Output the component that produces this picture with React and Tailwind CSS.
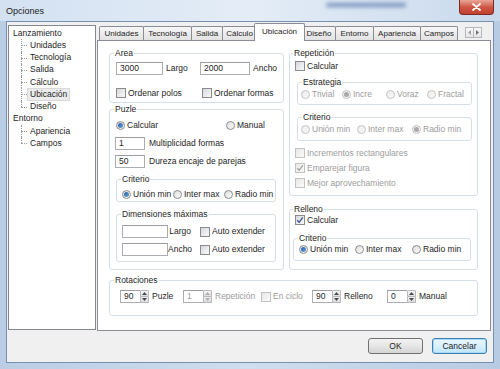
import React from "react";

// Opciones dialog — Win7 look
const tabs = [
  ["Unidades", "w-[45px]"],
  ["Tecnología", "w-[49px]"],
  ["Salida", "w-[32px]"],
  ["Cálculo", "w-[35px]"],
  ["Ubicación", "w-[51px]", true],
  ["Diseño", "w-[34px]"],
  ["Entorno", "w-[39px]"],
  ["Apariencia", "w-[48px]"],
  ["Campos", "w-[38px]"],
];

const tree = [
  { label: "Lanzamiento", kids: ["Unidades", "Tecnología", "Salida", "Cálculo", "Ubicación", "Diseño"] },
  { label: "Entorno", kids: ["Apariencia", "Campos"] },
];

function Radio({ checked, disabled, label, className = "" }) {
  return (
    <div className={`flex items-center h-[11px] shrink-0 ${className}`}>
      <span
        className={`w-[9px] h-[9px] rounded-full border flex items-center justify-center shrink-0 ${
          disabled
            ? "border-[#c2c2c2] bg-gradient-to-br from-[#ececec] to-[#fafafa]"
            : "border-[#8b8b8b] bg-gradient-to-br from-[#d9dce0] to-[#fdfdfd]"
        }`}
      >
        {checked && (
          <span
            className={`w-[5px] h-[5px] rounded-full ${
              disabled ? "bg-[#a9a9a9]" : "bg-gradient-to-br from-[#1c5aa0] to-[#6fa8dc]"
            }`}
          />
        )}
      </span>
      <span className={`ml-[2px] whitespace-nowrap ${disabled ? "text-[#9c9c9c]" : ""}`}>{label}</span>
    </div>
  );
}

function Check({ checked, disabled, label, className = "" }) {
  return (
    <div className={`flex items-center h-[10px] shrink-0 ${className}`}>
      <span
        className={`w-[10px] h-[10px] border flex items-center justify-center shrink-0 ${
          disabled
            ? "border-[#c2c2c2] bg-gradient-to-br from-[#e8e8e8] to-[#fafafa]"
            : "border-[#8b8b8b] bg-gradient-to-br from-[#d5d8dd] to-[#fafafa]"
        }`}
      >
        {checked && (
          <svg width="8" height="8" viewBox="0 0 8 8">
            <path
              d="M1.2 4.2 L3.2 6.3 L6.8 1.3"
              fill="none"
              stroke={disabled ? "#a0a0a0" : "#3b5590"}
              strokeWidth="1.3"
            />
          </svg>
        )}
      </span>
      <span className={`ml-[2px] whitespace-nowrap ${disabled ? "text-[#9c9c9c]" : ""}`}>{label}</span>
    </div>
  );
}

function TextBox({ value = "", className = "", disabled }) {
  return (
    <div
      className={`h-[13px] border border-[#abadb3] border-t-[#9a9ca4] bg-white flex items-center pl-[3px] shrink-0 ${
        disabled ? "text-[#9c9c9c]" : ""
      } ${className}`}
    >
      {value}
    </div>
  );
}

function Spin({ value, disabled, label, className = "" }) {
  const arrow = disabled ? "#b0b0b0" : "#4a4a4a";
  return (
    <div className={`flex items-center shrink-0 ${className}`}>
      <TextBox value={value} disabled={disabled} className="w-[20px] border-r-0" />
      <div className="w-[9px] h-[13px] flex flex-col shrink-0">
        <div className="flex-1 border border-[#b7b9bf] rounded-t-[1px] bg-gradient-to-b from-[#f6f6f6] to-[#e1e1e1] flex items-center justify-center">
          <svg width="5" height="3" viewBox="0 0 5 3">
            <path d="M0 3 L2.5 0 L5 3 Z" fill={arrow} />
          </svg>
        </div>
        <div className="flex-1 border border-t-0 border-[#b7b9bf] rounded-b-[1px] bg-gradient-to-b from-[#f0f0f0] to-[#dcdcdc] flex items-center justify-center">
          <svg width="5" height="3" viewBox="0 0 5 3">
            <path d="M0 0 L2.5 3 L5 0 Z" fill={arrow} />
          </svg>
        </div>
      </div>
      <span className={`ml-[3px] whitespace-nowrap ${disabled ? "text-[#9c9c9c]" : ""}`}>{label}</span>
    </div>
  );
}

function Group({ title, className = "", legendClass = "ml-[4px]", children }) {
  return (
    <fieldset className={`border border-[#d5dfe5] rounded-[3px] min-w-0 ${className}`}>
      <legend className={`px-[1px] leading-[11px] ${legendClass}`}>{title}</legend>
      {children}
    </fieldset>
  );
}

function TreeRow({ label, last, selected }) {
  return (
    <div className="flex items-center h-[12.25px]">
      <div className="relative ml-[12px] w-[7px] self-stretch shrink-0">
        <div
          className={`absolute left-0 top-0 border-l border-dotted border-[#9a9a9a] ${last ? "h-1/2" : "h-full"}`}
        />
        <div className="absolute left-0 top-1/2 w-[6px] border-t border-dotted border-[#9a9a9a]" />
      </div>
      <span
        className={`px-[2px] leading-[11px] ${
          selected ? "bg-[#ececec] border border-[#d9d9d9] -ml-px" : "border border-transparent -ml-px"
        }`}
      >
        {label}
      </span>
    </div>
  );
}

export default function App() {
  return (
    <div className="relative w-[500px] h-[369px] overflow-hidden flex flex-col bg-gradient-to-r from-[#b9cde4] via-[#cfdeef] to-[#b7cbe2] font-['Liberation_Sans',Arial,sans-serif] text-[8.5px] leading-[11px] text-[#1e1e1e]">
      {/* Title bar */}
      <div className="h-[21px] flex items-start shrink-0 bg-gradient-to-r from-[#d3e1f1] via-[#e4edf7] to-[#c9d9ec] relative">
        <span className="ml-[6px] mt-[6px] text-[9px] text-[#1b1b1b]">Opciones</span>
        <span className="ml-[282px] mt-[3px] w-[80px] h-[4px] rounded-full bg-[#4f6fa5] blur-[2px] opacity-70" />
        <div className="ml-auto mr-[6px] w-[35px] h-[15px] rounded-b-[4px] border border-t-0 border-[#7d2a22] bg-gradient-to-b from-[#e8a598] via-[#cf5645] to-[#c2402f] flex items-center justify-center">
          <svg width="9" height="8" viewBox="0 0 9 8">
            <path d="M1 1 L8 7 M8 1 L1 7" stroke="#ffffff" strokeWidth="1.8" strokeLinecap="round" />
          </svg>
        </div>
      </div>

      {/* Body */}
      <div className="mx-[6px] h-[342px] border border-[#7790b0] bg-[#f0f0f0] flex flex-col shrink-0">
        <div className="flex items-start">
          {/* Tree */}
          <div className="ml-[1px] mt-[3px] w-[88px] h-[305px] border border-[#828790] bg-white pt-[1px] shrink-0">
            {tree.map((n) => (
              <div key={n.label}>
                <div className="h-[12.25px] flex items-center pl-[4px]">{n.label}</div>
                {n.kids.map((k, i) => (
                  <TreeRow key={k} label={k} last={i === n.kids.length - 1} selected={k === "Ubicación"} />
                ))}
              </div>
            ))}
          </div>

          {/* Tabs */}
          <div className="ml-[1px] mt-[1px] w-[394px] shrink-0">
            <div className="h-[17px] flex items-end pl-[2px] text-[8px]">
              {tabs.map(([t, w, sel], i) =>
                sel ? (
                  <div
                    key={t}
                    className={`${w} -ml-[3px] -mr-[2px] h-[18px] -mb-px relative z-10 bg-white border border-b-0 border-[#898c95] rounded-t-[2px] flex justify-center pt-[2px]`}
                  >
                    {t}
                  </div>
                ) : (
                  <div
                    key={t}
                    className={`${w} ${i === 0 ? "" : "-ml-px"} h-[14px] border border-b-0 border-[#898c95] rounded-t-[2px] bg-gradient-to-b from-[#f7f7f7] to-[#e2e2e2] flex items-center justify-center`}
                  >
                    {t}
                  </div>
                )
              )}
              <div className="ml-[7px] mb-[2px] flex">
                <div className="w-[9px] h-[11px] border border-[#b5b8be] bg-gradient-to-b from-[#f8f8f8] to-[#e6e6e6] flex items-center justify-center">
                  <svg width="3" height="5" viewBox="0 0 3 5">
                    <path d="M3 0 L0 2.5 L3 5 Z" fill="#a0a0a0" />
                  </svg>
                </div>
                <div className="w-[9px] h-[11px] -ml-px border border-[#b5b8be] bg-gradient-to-b from-[#f8f8f8] to-[#e6e6e6] flex items-center justify-center">
                  <svg width="3" height="5" viewBox="0 0 3 5">
                    <path d="M0 0 L3 2.5 L0 5 Z" fill="#707070" />
                  </svg>
                </div>
              </div>
            </div>

            <div className="h-[291px] border border-[#898c95] bg-white pl-[11px] pt-[7px]">
              <div className="flex items-start">
                {/* Left column */}
                <div className="w-[175px] shrink-0">
                  <Group title="Area" className="pb-[4px]">
                    <div className="flex items-center mt-[3px]">
                      <TextBox value="3000" className="ml-[6px] w-[47px]" />
                      <span className="ml-[3px] w-[34px]">Largo</span>
                      <TextBox value="2000" className="w-[50px]" />
                      <span className="ml-[3px]">Ancho</span>
                    </div>
                    <div className="flex items-center mt-[13px]">
                      <Check label="Ordenar polos" className="ml-[6px] w-[86px]" />
                      <Check label="Ordenar formas" />
                    </div>
                  </Group>

                  <Group title="Puzle" className="mt-[1px] pb-[7px]">
                    <div className="flex items-center mt-[5px]">
                      <Radio checked label="Calcular" className="ml-[6px] w-[110px]" />
                      <Radio label="Manual" />
                    </div>
                    <div className="flex items-center mt-[6px]">
                      <TextBox value="1" className="ml-[5px] w-[30px]" />
                      <span className="ml-[4px]">Multiplicidad formas</span>
                    </div>
                    <div className="flex items-center mt-[5px]">
                      <TextBox value="50" className="ml-[5px] w-[30px]" />
                      <span className="ml-[4px]">Dureza encaje de parejas</span>
                    </div>
                    <Group title="Criterio" className="ml-[6px] w-[160px] mt-[6px] pb-[1px]">
                      <div className="flex items-center mt-[4px]">
                        <Radio checked label="Unión min" className="ml-[5px] w-[51px]" />
                        <Radio label="Inter max" className="w-[51px]" />
                        <Radio label="Radio min" />
                      </div>
                    </Group>
                    <Group title="Dimensiones máximas" className="ml-[6px] w-[160px] mt-[7px] pb-[5px]">
                      <div className="flex items-center mt-[5px]">
                        <TextBox className="ml-[5px] w-[46px]" />
                        <span className="w-[23px] text-right">Largo</span>
                        <Check label="Auto extender" className="ml-[9px]" />
                      </div>
                      <div className="flex items-center mt-[5px]">
                        <TextBox className="ml-[5px] w-[46px]" />
                        <span className="w-[23px] text-right">Ancho</span>
                        <Check label="Auto extender" className="ml-[9px]" />
                      </div>
                    </Group>
                  </Group>
                </div>

                {/* Right column */}
                <div className="ml-[5px] w-[189px] shrink-0">
                  <Group title="Repetición" legendClass="ml-[3px]" className="pb-[7px]">
                    <Check label="Calcular" className="ml-[5px] mt-[2px]" />
                    <Group title="Estrategia" className="ml-[7px] w-[175px] mt-[6px] pb-[4px]">
                      <div className="flex items-center mt-[1px]">
                        <Radio disabled label="Trivial" className="ml-[3px] w-[41px]" />
                        <Radio disabled checked label="Incre" className="w-[44px]" />
                        <Radio disabled label="Voraz" className="w-[41px]" />
                        <Radio disabled label="Fractal" />
                      </div>
                    </Group>
                    <Group title="Criterio" className="ml-[7px] w-[175px] mt-[7px] pb-[5px]">
                      <div className="flex items-center mt-[1px]">
                        <Radio disabled label="Unión min" className="ml-[3px] w-[56px]" />
                        <Radio disabled label="Inter max" className="w-[55px]" />
                        <Radio disabled checked label="Radio min" />
                      </div>
                    </Group>
                    <Check disabled label="Incrementos rectangulares" className="ml-[5px] mt-[7px]" />
                    <Check disabled checked label="Emparejar figura" className="ml-[5px] mt-[5px]" />
                    <Check disabled label="Mejor aprovechamiento" className="ml-[5px] mt-[5px]" />
                  </Group>

                  <Group title="Relleno" legendClass="ml-[3px]" className="mt-[8px] pb-[8px]">
                    <Check checked label="Calcular" className="ml-[5px]" />
                    <Group title="Criterio" className="ml-[3px] w-[178px] mt-[8px] pb-[5px]">
                      <div className="flex items-center">
                        <Radio checked label="Unión min" className="ml-[5px] w-[56px]" />
                        <Radio label="Inter max" className="w-[57px]" />
                        <Radio label="Radio min" />
                      </div>
                    </Group>
                  </Group>
                </div>
              </div>

              <Group title="Rotaciones" className="w-[369px] mt-[5px] pb-[12px]">
                <div className="flex items-center mt-[4px]">
                  <Spin value="90" label="Puzle" className="ml-[10px] w-[63px]" />
                  <Spin value="1" disabled label="Repetición" className="w-[78px]" />
                  <Check disabled label="En ciclo" className="w-[51px]" />
                  <Spin value="90" label="Relleno" className="w-[75px]" />
                  <Spin value="0" label="Manual" />
                </div>
              </Group>
            </div>
          </div>
        </div>

        {/* Buttons */}
        <div className="flex justify-end mt-[7px] pr-[6px]">
          <div className="w-[55px] h-[16px] rounded-[3px] border border-[#707070] bg-gradient-to-b from-[#f2f2f2] via-[#e6e6e6] to-[#d4d4d4] flex items-center justify-center">
            OK
          </div>
          <div className="ml-[9px] w-[55px] h-[16px] rounded-[3px] border border-[#3c7fb1] bg-gradient-to-b from-[#eaf6fd] via-[#d9f0fc] to-[#bee6fd] flex items-center justify-center shadow-[inset_0_0_0_1px_#a7d8f6]">
            Cancelar
          </div>
        </div>
      </div>
    </div>
  );
}
